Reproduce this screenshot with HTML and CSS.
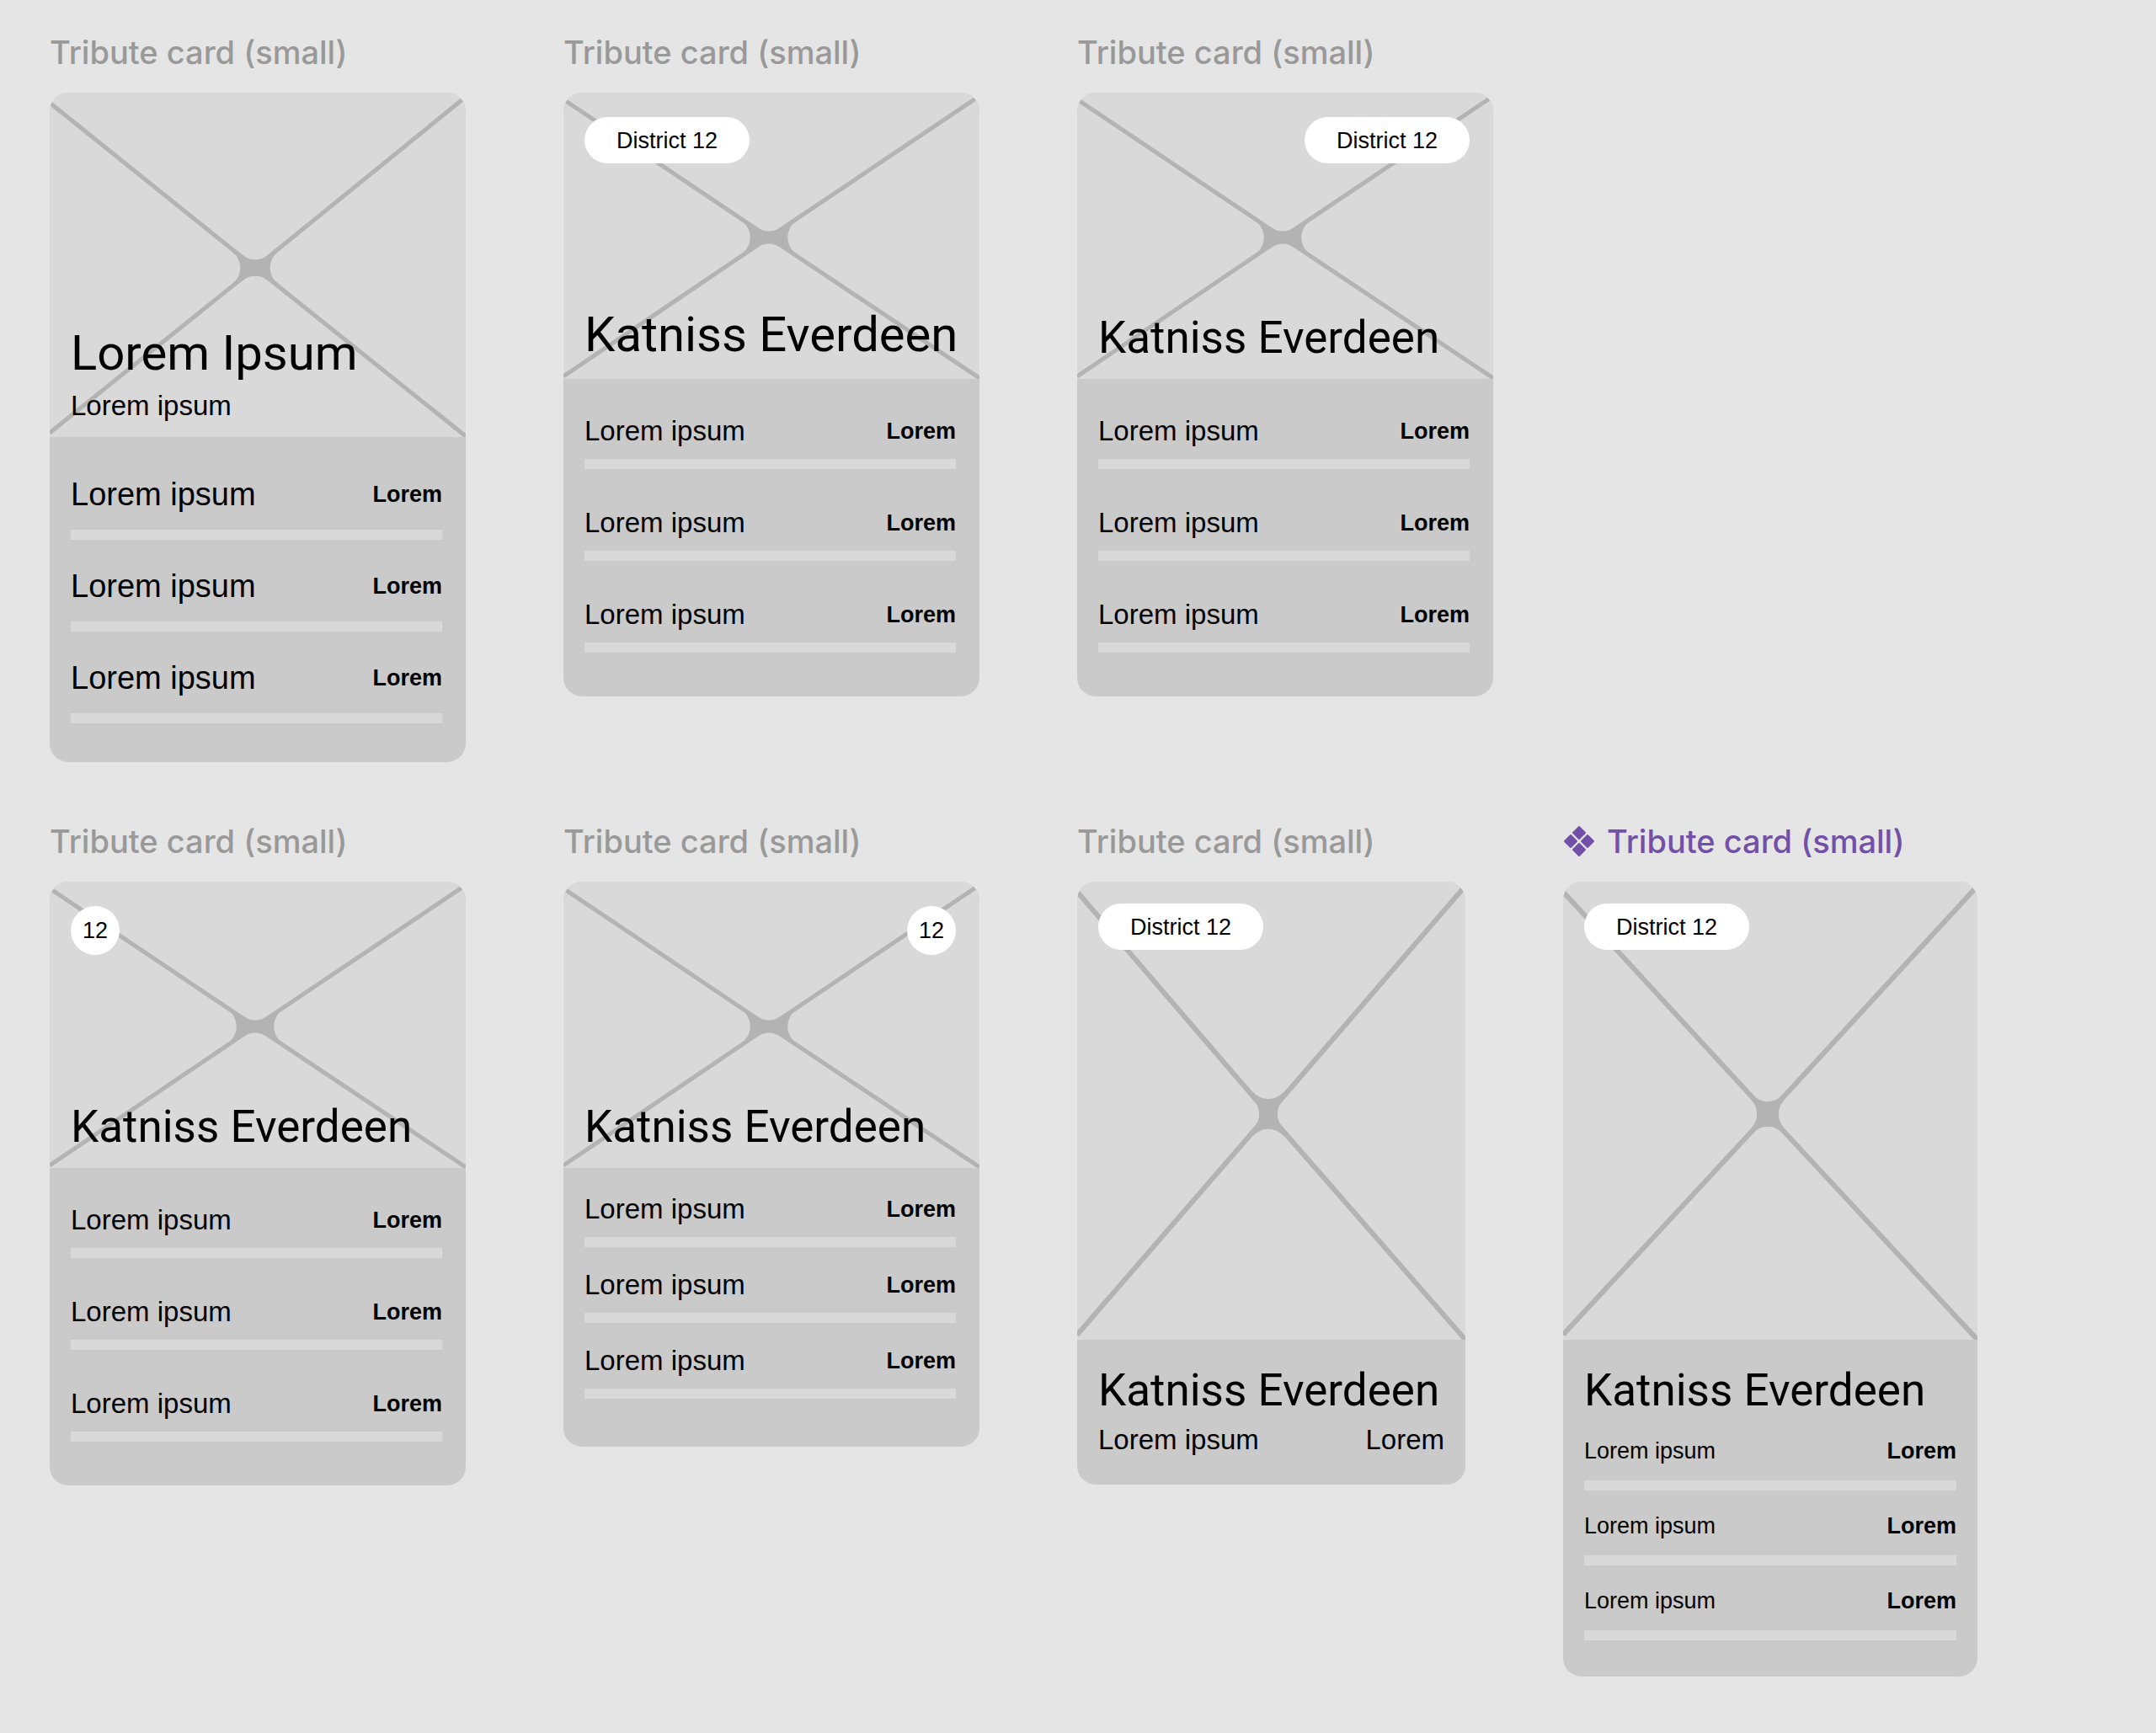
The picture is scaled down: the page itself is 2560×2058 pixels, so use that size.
FILE: index.html
```html
<!DOCTYPE html>
<html lang="en">
<head>
<meta charset="utf-8">
<meta name="viewport" content="width=device-width, initial-scale=1">
<title>Tribute cards</title>
<link rel="stylesheet" href="styles.css">
</head>
<body>
<svg class="defs" aria-hidden="true">
  <!-- Crossed-lines placeholder for landscape pictures -->
  <symbol id="cross-wide" viewBox="0 0 494 340">
    <g transform="translate(244 172)">
      <path class="cross-line" d="M0 0L-244 -164M0 0L250 -168M0 0L-244 165M0 0L250 167"/>
      <path class="cross-hub" d="M-33 -20L-14 -12A24 24 0 0 0 14 -12L33 -20A24 24 0 0 0 33 20L14 12A24 24 0 0 0 -14 12L-33 20A24 24 0 0 0 -33 -20Z"/>
    </g>
  </symbol>
</svg>
<main class="board">
  <section class="row">
    <article class="item">
      <h2 class="label">Tribute card (small)</h2>
      <div class="card">
        <div class="picture">
          <svg class="cross" viewBox="0 0 494 409" aria-hidden="true">
            <g transform="translate(244 208)">
              <path class="cross-line" d="M0 0L-244 -196M0 0L250 -203M0 0L-244 196M0 0L250 200"/>
              <path class="cross-hub" d="M-27 -19L-15 -15A24 24 0 0 0 15 -15L27 -19A24 24 0 0 0 27 19L15 15A24 24 0 0 0 -15 15L-27 19A24 24 0 0 0 -27 -19Z"/>
            </g>
          </svg>
          <div class="overlay overlay-intro">
            <h3 class="name name-large">Lorem Ipsum</h3>
            <p class="text">Lorem ipsum</p>
          </div>
        </div>
        <ul class="stats stats-large">
          <li class="stat"><div class="stat-head"><span>Lorem ipsum</span><b>Lorem</b></div><div class="bar"></div></li>
          <li class="stat"><div class="stat-head"><span>Lorem ipsum</span><b>Lorem</b></div><div class="bar"></div></li>
          <li class="stat"><div class="stat-head"><span>Lorem ipsum</span><b>Lorem</b></div><div class="bar"></div></li>
        </ul>
      </div>
    </article>

    <article class="item">
      <h2 class="label">Tribute card (small)</h2>
      <div class="card">
        <div class="picture">
          <svg class="cross" viewBox="0 0 494 340" aria-hidden="true"><use href="#cross-wide"/></svg>
          <div class="overlay">
            <span class="badge">District 12</span>
            <h3 class="name name-large">Katniss Everdeen</h3>
          </div>
        </div>
        <ul class="stats">
          <li class="stat"><div class="stat-head"><span>Lorem ipsum</span><b>Lorem</b></div><div class="bar"></div></li>
          <li class="stat"><div class="stat-head"><span>Lorem ipsum</span><b>Lorem</b></div><div class="bar"></div></li>
          <li class="stat"><div class="stat-head"><span>Lorem ipsum</span><b>Lorem</b></div><div class="bar"></div></li>
        </ul>
      </div>
    </article>

    <article class="item">
      <h2 class="label">Tribute card (small)</h2>
      <div class="card">
        <div class="picture">
          <svg class="cross" viewBox="0 0 494 340" aria-hidden="true"><use href="#cross-wide"/></svg>
          <div class="overlay">
            <span class="badge badge-end">District 12</span>
            <h3 class="name">Katniss Everdeen</h3>
          </div>
        </div>
        <ul class="stats">
          <li class="stat"><div class="stat-head"><span>Lorem ipsum</span><b>Lorem</b></div><div class="bar"></div></li>
          <li class="stat"><div class="stat-head"><span>Lorem ipsum</span><b>Lorem</b></div><div class="bar"></div></li>
          <li class="stat"><div class="stat-head"><span>Lorem ipsum</span><b>Lorem</b></div><div class="bar"></div></li>
        </ul>
      </div>
    </article>
  </section>

  <section class="row">
    <article class="item">
      <h2 class="label">Tribute card (small)</h2>
      <div class="card">
        <div class="picture">
          <svg class="cross" viewBox="0 0 494 340" aria-hidden="true"><use href="#cross-wide"/></svg>
          <div class="overlay">
            <span class="badge badge-round">12</span>
            <h3 class="name">Katniss Everdeen</h3>
          </div>
        </div>
        <ul class="stats">
          <li class="stat"><div class="stat-head"><span>Lorem ipsum</span><b>Lorem</b></div><div class="bar"></div></li>
          <li class="stat"><div class="stat-head"><span>Lorem ipsum</span><b>Lorem</b></div><div class="bar"></div></li>
          <li class="stat"><div class="stat-head"><span>Lorem ipsum</span><b>Lorem</b></div><div class="bar"></div></li>
        </ul>
      </div>
    </article>

    <article class="item">
      <h2 class="label">Tribute card (small)</h2>
      <div class="card">
        <div class="picture">
          <svg class="cross" viewBox="0 0 494 340" aria-hidden="true"><use href="#cross-wide"/></svg>
          <div class="overlay">
            <span class="badge badge-round badge-end">12</span>
            <h3 class="name">Katniss Everdeen</h3>
          </div>
        </div>
        <ul class="stats stats-tight">
          <li class="stat"><div class="stat-head"><span>Lorem ipsum</span><b>Lorem</b></div><div class="bar"></div></li>
          <li class="stat"><div class="stat-head"><span>Lorem ipsum</span><b>Lorem</b></div><div class="bar"></div></li>
          <li class="stat"><div class="stat-head"><span>Lorem ipsum</span><b>Lorem</b></div><div class="bar"></div></li>
        </ul>
      </div>
    </article>

    <article class="item item-narrow">
      <h2 class="label">Tribute card (small)</h2>
      <div class="card">
        <div class="picture">
          <svg class="cross" viewBox="0 0 461 544" aria-hidden="true">
            <g transform="translate(227 276)">
              <path class="cross-line cross-line-tall" d="M0 0L-227 -264M0 0L234 -271M0 0L-227 262M0 0L234 268"/>
              <path class="cross-hub" d="M-17 -16L-18 -26A24 24 0 0 0 18 -26L17 -16A24 24 0 0 0 17 16L18 26A24 24 0 0 0 -18 26L-17 16A24 24 0 0 0 -17 -16Z"/>
            </g>
          </svg>
          <div class="overlay overlay-tall">
            <span class="badge">District 12</span>
          </div>
        </div>
        <div class="details">
          <h3 class="name">Katniss Everdeen</h3>
          <p class="text text-pair"><span>Lorem ipsum</span><span>Lorem</span></p>
        </div>
      </div>
    </article>

    <article class="item item-component">
      <h2 class="label label-component">
        <svg class="component-icon" viewBox="0 0 38 38" aria-hidden="true">
          <path d="M19 2L26 9L19 16L12 9ZM9 12L16 19L9 26L2 19ZM29 12L36 19L29 26L22 19ZM19 22L26 29L19 36L12 29Z"/>
        </svg>
        Tribute card (small)
      </h2>
      <div class="card">
        <div class="picture">
          <svg class="cross" viewBox="0 0 492 544" aria-hidden="true">
            <g transform="translate(243 276)">
              <path class="cross-line cross-line-tall" d="M0 0L-243 -264M0 0L249 -271M0 0L-243 262M0 0L249 268"/>
              <path class="cross-hub" d="M-19 -16L-18 -23A24 24 0 0 0 18 -23L19 -16A24 24 0 0 0 19 16L18 23A24 24 0 0 0 -18 23L-19 16A24 24 0 0 0 -19 -16Z"/>
            </g>
          </svg>
          <div class="overlay overlay-tall">
            <span class="badge">District 12</span>
          </div>
        </div>
        <div class="details details-stats">
          <h3 class="name">Katniss Everdeen</h3>
          <ul class="stats stats-small">
            <li class="stat"><div class="stat-head"><span>Lorem ipsum</span><b>Lorem</b></div><div class="bar"></div></li>
            <li class="stat"><div class="stat-head"><span>Lorem ipsum</span><b>Lorem</b></div><div class="bar"></div></li>
            <li class="stat"><div class="stat-head"><span>Lorem ipsum</span><b>Lorem</b></div><div class="bar"></div></li>
          </ul>
        </div>
      </div>
    </article>
  </section>
</main>
</body>
</html>
```
FILE: styles.css
```css
* {
  box-sizing: border-box;
  margin: 0;
  padding: 0;
}

body {
  background: #e5e5e5;
  color: #000;
  font-family: "Liberation Sans", Arial, sans-serif;
}

.defs {
  display: none;
}

.board {
  display: flex;
  flex-direction: column;
  gap: 71px;
  padding: 39px 59px 66px;
}

.row {
  display: flex;
  flex-wrap: wrap;
  align-items: flex-start;
  gap: 71px 116px;
}

.item {
  display: flex;
  flex-direction: column;
  gap: 25px;
  width: 494px;
  max-width: 100%;
}

.item-narrow {
  width: 461px;
}

.item-component {
  width: 492px;
}

.label {
  display: flex;
  align-items: center;
  gap: 14px;
  color: #999;
  font: 500 38px/46px Inter, sans-serif;
  white-space: nowrap;
}

.label-component {
  color: #7350a8;
}

.component-icon {
  width: 38px;
  height: 38px;
  fill: currentColor;
  stroke: currentColor;
  stroke-width: 2;
  stroke-linejoin: round;
}

.card {
  overflow: hidden;
  border-radius: 22px;
  background: #cacaca;
}

.picture {
  display: grid;
  grid-template-columns: minmax(0, 1fr);
  background: #d9d9d9;
}

.cross,
.overlay {
  grid-area: 1 / 1;
}

.cross {
  display: block;
  width: 100%;
}

.cross-line {
  fill: none;
  stroke: #b3b3b3;
  stroke-width: 5;
}

.cross-line-tall {
  stroke-width: 6;
}

.cross-hub {
  fill: #b3b3b3;
}

.overlay {
  z-index: 1;
  display: flex;
  flex-direction: column;
  align-items: flex-start;
  justify-content: space-between;
  padding: 29px 28px 19px 25px;
}

.overlay-intro {
  justify-content: flex-end;
  gap: 7px;
  padding-bottom: 15px;
}

.overlay-tall {
  padding: 26px 25px;
}

.badge {
  display: flex;
  align-items: center;
  justify-content: center;
  width: 196px;
  height: 55px;
  border-radius: 28px;
  background: #fff;
  font-size: 27px;
  line-height: 32px;
}

.badge-round {
  width: 58px;
  height: 58px;
  border-radius: 50%;
}

.badge-end {
  align-self: flex-end;
}

.name {
  font: 400 53px/60px Roboto, sans-serif;
  white-space: nowrap;
}

.name-large {
  font-size: 58px;
  line-height: 68px;
}

.text {
  font-size: 33px;
  line-height: 44px;
}

.text-pair {
  display: flex;
  justify-content: space-between;
}

.details {
  display: flex;
  flex-direction: column;
  gap: 7px;
  padding: 30px 25px 31px;
}

.details-stats {
  gap: 20px;
  padding-bottom: 43px;
}

.stats {
  display: flex;
  flex-direction: column;
  gap: 42px;
  padding: 40px 28px 52px 25px;
  list-style: none;
  font-size: 33px;
  line-height: 44px;
}

.stat {
  display: flex;
  flex-direction: column;
  gap: 11px;
}

.stat-head {
  display: flex;
  align-items: center;
  justify-content: space-between;
}

.stat-head b {
  font-size: 27px;
}

.bar {
  height: 12px;
  background: #d9d9d9;
}

.stats-large {
  gap: 33px;
  padding-top: 46px;
  padding-bottom: 46px;
  font-size: 38px;
}

.stats-large .stat {
  gap: 20px;
}

.stats-tight {
  gap: 23px;
  padding-top: 27px;
  padding-bottom: 57px;
}

.stats-small {
  gap: 20px;
  padding: 0;
  font-size: 27px;
}

.stats-small .stat {
  gap: 13px;
}
```
